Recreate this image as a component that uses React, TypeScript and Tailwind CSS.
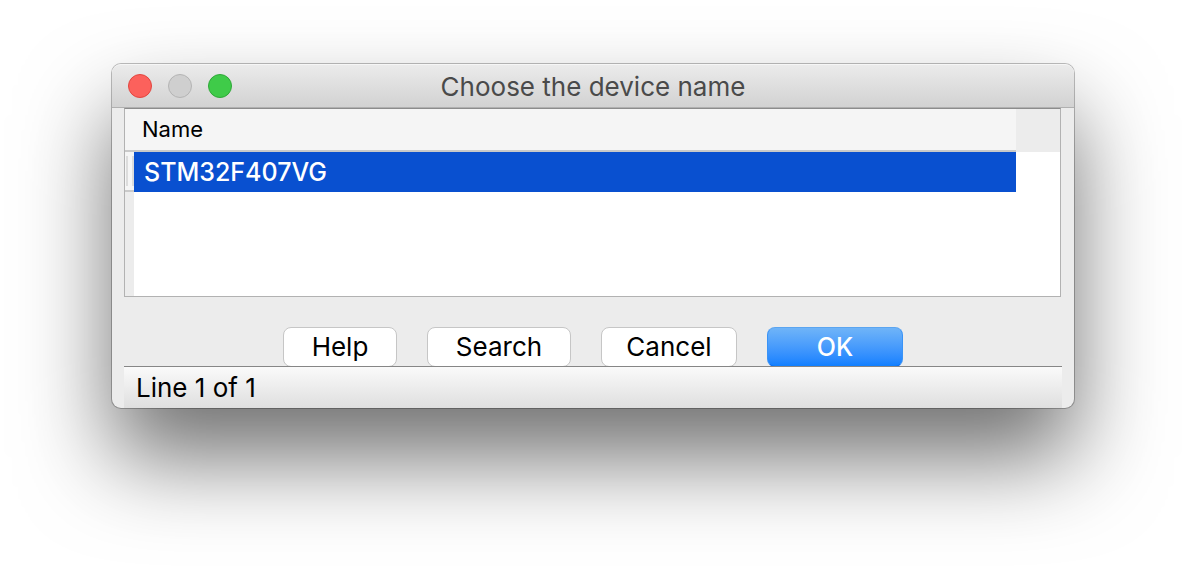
import React from "react";

const windowControls = [
  { label: "Close", color: "border-[#e2463f] bg-[#fc615c]" },
  { label: "Minimize", color: "border-[#b4b4b4] bg-[#cfcfcf]" },
  { label: "Zoom", color: "border-[#2fa838] bg-[#3fcb49]" },
];

const actions = [
  { label: "Help", width: "w-[114px]" },
  { label: "Search", width: "w-36" },
  { label: "Cancel", width: "w-[136px]" },
];

const devices = ["STM32F407VG"];

function TitleBar() {
  return (
    <header className="grid h-11 grid-cols-[1fr_auto_1fr] items-center rounded-t-[9px] border-t border-b border-t-[#f6f6f6] border-b-[#b0b0b0] bg-linear-to-b from-[#ebebeb] to-[#d2d2d2] px-4">
      <div className="flex gap-4">
        {windowControls.map((c) => (
          <button
            key={c.label}
            type="button"
            aria-label={c.label}
            className={`size-6 rounded-full border ${c.color}`}
          />
        ))}
      </div>
      <h1 className="pt-0.5 text-[26px] leading-8 text-[#4a4a4a]">Choose the device name</h1>
    </header>
  );
}

function DeviceTable() {
  return (
    <div className="mr-px border border-[#b2b2b2] border-t-[#8c8c8c] bg-white">
      <table className="w-full table-fixed border-separate border-spacing-0">
        <colgroup>
          <col className="w-[9px]" />
          <col />
          <col className="w-11" />
        </colgroup>
        <thead>
          <tr className="h-[43px]">
            <th
              colSpan={2}
              scope="col"
              className="border-b-2 border-[#c9c9c9] bg-[#f5f5f5] pt-0 pr-0 pb-0.5 pl-[17px] text-left text-[22px] leading-7 font-normal"
            >
              Name
            </th>
            <td className="bg-[#ececec] p-0" />
          </tr>
        </thead>
        <tbody>
          {devices.map((name) => (
            <tr key={name} className="h-10" aria-selected="true">
              <td className="border-b-2 border-[#c9c9c9] bg-[#f5f5f5] p-0">
                <div className="ml-px h-[30px] border-x-2 border-[#dcdcdc]" />
              </td>
              <td className="bg-[#0950d0] p-0 pl-[10px] text-[25px] leading-8 font-medium text-white">
                {name}
              </td>
              <td className="p-0" />
            </tr>
          ))}
          <tr className="h-26">
            <td className="bg-[#ececec] p-0" />
            <td className="p-0" />
            <td className="p-0" />
          </tr>
        </tbody>
      </table>
    </div>
  );
}

export default function App() {
  return (
    <main className="min-h-screen bg-white px-28 pt-16 font-['Inter','Liberation_Sans',sans-serif] text-black">
      <section className="rounded-[9px] bg-[#ececec] shadow-[0_0_0_1px_rgba(0,0,0,0.25),0_50px_90px_rgba(0,0,0,0.56)]">
        <TitleBar />
        <div className="px-3">
          <DeviceTable />
          <div className="flex justify-center gap-[30px] pt-[30px]">
            {actions.map((a) => (
              <button
                key={a.label}
                type="button"
                className={`h-10 rounded-lg border border-[#c6c6c6] bg-white text-[26px] leading-8 ${a.width}`}
              >
                {a.label}
              </button>
            ))}
            <button
              type="button"
              className="h-10 w-[136px] rounded-lg border border-t-[#5ba5f0] border-x-[#3a93f6] border-b-[#0a6cf0] bg-linear-to-b from-[#6fb4f8] to-[#0f7fff] text-[25px] leading-8 font-medium text-white"
            >
              OK
            </button>
          </div>
          <footer className="relative -mt-px h-[42px] border-t border-[#868686] bg-linear-to-b from-[#fafafa] to-[#dfdfdf] px-3 text-[26px] leading-[42px]">
            Line 1 of 1
          </footer>
        </div>
      </section>
    </main>
  );
}
